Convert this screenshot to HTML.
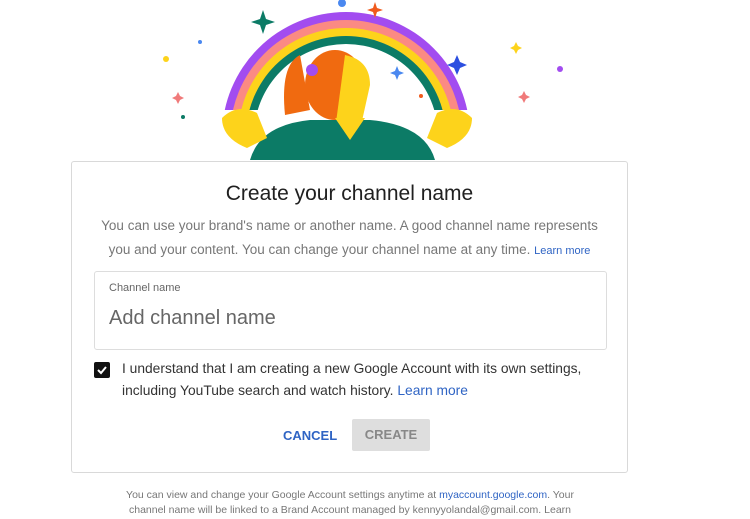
<html><head><style>
body{margin:0;width:750px;height:519px;background:#fff;font-family:"Liberation Sans",sans-serif;position:relative;overflow:hidden}
.card{position:absolute;left:71px;top:161px;width:555px;height:310px;border:1px solid #d9d9d9;border-radius:3px;background:#fff}
h1{position:absolute;top:20px;left:0;width:100%;text-align:center;font-size:21px;font-weight:normal;color:#202020;margin:0}
.desc{position:absolute;top:52px;left:20px;width:515px;text-align:center;font-size:13.5px;line-height:24px;color:#777}
a{color:#2f64c4;text-decoration:none}
.inp{position:absolute;left:22px;top:109px;width:511px;height:77px;border:1px solid #ddd;border-radius:3px}
.lbl{position:absolute;left:14px;top:10px;font-size:11px;color:#666}
.ph{position:absolute;left:14px;top:35px;font-size:20px;color:#666}
.cb{position:absolute;left:22px;top:200px;width:16px;height:16px;background:#111;border-radius:2px}
.ct{position:absolute;left:50px;top:196px;font-size:13.8px;line-height:22px;color:#333}
.cancel{position:absolute;left:211px;top:266px;font-size:13px;font-weight:bold;color:#2f64c4}
.create{position:absolute;left:280px;top:257px;width:78px;height:32px;background:#dedede;color:#888;font-size:13px;font-weight:bold;text-align:center;line-height:32px;border-radius:2px}
.foot{position:absolute;top:488px;left:112px;width:476px;text-align:center;font-size:10.5px;line-height:15px;color:#777}
</style></head><body>
<svg width="750" height="161" style="position:absolute;left:0;top:0">
<defs><clipPath id="c"><rect x="0" y="0" width="750" height="110"/></clipPath></defs>
<g clip-path="url(#c)">
<circle cx="346" cy="136" r="124" fill="#a24cf0"/>
<circle cx="346" cy="136" r="116" fill="#fb8a83"/>
<circle cx="346" cy="136" r="108" fill="#fdd31b"/>
<circle cx="346" cy="136" r="100" fill="#0c7b66"/>
<circle cx="346" cy="136" r="92" fill="#fff"/>
</g>
<path d="M263 10l3 9 9 3-9 3-3 9-3-9-9-3 9-3z" fill="#0c7b66"/>
<path d="M375 2l2 6 6 2-6 2-2 6-2-6-6-2 6-2z" fill="#f05a1c"/>
<circle cx="342" cy="3" r="4" fill="#4a88f0"/>
<path d="M457 55l3 7 7 3-7 3-3 7-3-7-7-3 7-3z" fill="#2c4fe0"/>
<path d="M397 66l2 5 5 2-5 2-2 5-2-5-5-2 5-2z" fill="#4a88f0"/>
<circle cx="166" cy="59" r="3" fill="#fdd31b"/><circle cx="200" cy="42" r="2" fill="#4a88f0"/>
<circle cx="560" cy="69" r="3" fill="#a24cf0"/><circle cx="421" cy="96" r="2" fill="#f05a1c"/>
<circle cx="183" cy="117" r="2" fill="#0c7b66"/><path d="M178 92l2 4 4 2-4 2-2 4-2-4-4-2 4-2z" fill="#f07a7a"/>
<path d="M516 42l2 4 4 2-4 2-2 4-2-4-4-2 4-2z" fill="#fdd31b"/><path d="M524 91l2 4 4 2-4 2-2 4-2-4-4-2 4-2z" fill="#f07a7a"/>
<path d="M300 55q-20 10-15 60l25-5z" fill="#f06a10"/>
<ellipse cx="335" cy="85" rx="30" ry="35" fill="#f06a10"/>
<path d="M345 55q25 5 25 30l-10 45h-25z" fill="#fdd31b"/>
<circle cx="312" cy="70" r="6" fill="#a24cf0"/>
<path d="M250 160q10-35 60-40h60q55 5 65 40z" fill="#0c7b66"/>
<path d="M222 118q15-15 35-5l10 25-20 10q-25-10-25-30z" fill="#fdd31b"/>
<path d="M472 118q-15-15-35-5l-10 25 20 10q25-10 25-30z" fill="#fdd31b"/>
<path d="M335 118h30l-15 22z" fill="#fdd31b"/>
</svg>
<div class="card">
<h1>Create your channel name</h1>
<div class="desc">You can use your brand's name or another name. A good channel name represents you and your content. You can change your channel name at any time. <a style="font-size:11px">Learn more</a></div>
<div class="inp"><div class="lbl">Channel name</div><div class="ph">Add channel name</div></div>
<div class="cb"><svg width="16" height="16"><path d="M4 8l3 3 5-6" stroke="#fff" stroke-width="2" fill="none"/></svg></div>
<div class="ct">I understand that I am creating a new Google Account with its own settings,<br>including YouTube search and watch history. <a>Learn more</a></div>
<div class="cancel">CANCEL</div>
<div class="create">CREATE</div>
</div>
<div class="foot">You can view and change your Google Account settings anytime at <a>myaccount.google.com</a>. Your channel name will be linked to a Brand Account managed by kennyyolandal@gmail.com. Learn</div>
</body></html>
